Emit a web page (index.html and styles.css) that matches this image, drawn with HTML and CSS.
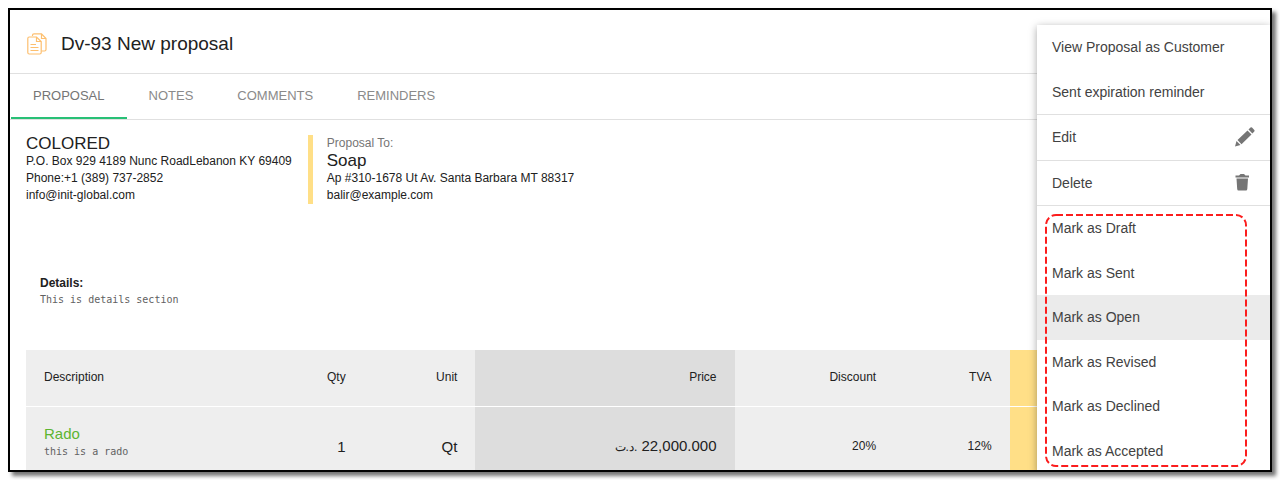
FILE: index.html
```
<!DOCTYPE html>
<html lang="en">
<head>
<meta charset="utf-8">
<title>Dv-93 New proposal</title>
<link rel="stylesheet" href="styles.css">
</head>
<body>
<main class="frame">
  <header class="page-header">
    <svg class="page-icon" viewBox="0 0 20 22" width="20" height="22" fill="none" stroke="#fdbf6f" stroke-width="1.2" aria-hidden="true">
      <path d="M5.5 3V2.2Q5.500.8 7 .8H14.5L19 5.500V16.500Q19 18 17.500 18H14.500M14.500.8V5.500H19"/>
      <path d="M2.200 4H9.500L14.200 8.500V19.500Q14.200 21 12.700 21H2.200Q.8 21 .8 19.500V5.500Q.8 4 2.200 4ZM9.500 4V8.500H14.200M3.500 11.500H9M3.500 14.500H11.500M3.500 17.500H11.500"/>
    </svg>
    <h1 class="title">Dv-93 New proposal</h1>
  </header>

  <nav class="tabs">
    <a class="tab tab-active" href="#proposal">PROPOSAL</a>
    <a class="tab" href="#notes">NOTES</a>
    <a class="tab" href="#comments">COMMENTS</a>
    <a class="tab" href="#reminders">REMINDERS</a>
  </nav>

  <section class="content">
    <div class="parties">
      <address class="party">
        <strong class="party-name">COLORED</strong>
        <span>P.O. Box 929 4189 Nunc RoadLebanon KY 69409</span>
        <span>Phone:+1 (389) 737-2852</span>
        <span>info@init-global.com</span>
      </address>
      <address class="party party-to">
        <span class="party-label">Proposal To:</span>
        <strong class="party-name">Soap</strong>
        <span>Ap #310-1678 Ut Av. Santa Barbara MT 88317</span>
        <span>balir@example.com</span>
      </address>
    </div>

    <div class="details">
      <h2 class="details-title">Details:</h2>
      <p class="note">This is details section</p>
    </div>

    <table class="items">
      <colgroup>
        <col class="col-desc"><col class="col-unit"><col class="col-price"><col class="col-discount"><col class="col-tva"><col>
      </colgroup>
      <thead>
        <tr>
          <th class="desc"><div class="split"><span>Description</span><span>Qty</span></div></th>
          <th>Unit</th>
          <th class="price">Price</th>
          <th>Discount</th>
          <th>TVA</th>
          <th class="total"></th>
        </tr>
      </thead>
      <tbody>
        <tr>
          <td class="desc">
            <div class="split">
              <div class="item"><a class="item-name" href="#rado">Rado</a><p class="note">this is a rado</p></div>
              <span class="amount">1</span>
            </div>
          </td>
          <td class="amount">Qt</td>
          <td class="price amount"><bdi class="currency" dir="rtl" lang="ar">.د.ت</bdi> 22,000.000</td>
          <td>20%</td>
          <td>12%</td>
          <td class="total"></td>
        </tr>
      </tbody>
    </table>
  </section>

  <div class="menu">
    <button class="menu-item" type="button">View Proposal as Customer</button>
    <button class="menu-item ruled" type="button">Sent expiration reminder</button>
    <button class="menu-item ruled" type="button">Edit
      <svg viewBox="0 0 20 20" width="20" height="20" fill="#757575" aria-hidden="true"><path d="M0 19.500L1.500 14 5.500 18ZM2.500 13L12.500 3.500 16.500 7.500 6.500 17.200ZM13.500 2.500L15.500.6Q16.200 0 17 .6L19.300 3Q20 3.700 19.300 4.500L17.400 6.500Z"/></svg>
    </button>
    <button class="menu-item ruled" type="button">Delete
      <svg viewBox="0 0 20 20" width="20" height="20" fill="#757575" aria-hidden="true"><path d="M.500 2.500H4L5.500 1H9L10.500 2.500H14V4.500H.500ZM1.500 5.500H13L12.300 16Q12.200 17.500 11 17.500H3.500Q2.300 17.500 2.200 16Z"/></svg>
    </button>
    <div class="marks">
      <button class="menu-item" type="button">Mark as Draft</button>
      <button class="menu-item" type="button">Mark as Sent</button>
      <button class="menu-item current" type="button">Mark as Open</button>
      <button class="menu-item" type="button">Mark as Revised</button>
      <button class="menu-item" type="button">Mark as Declined</button>
      <button class="menu-item" type="button">Mark as Accepted</button>
      <svg class="outline" aria-hidden="true"><rect x="1" y="1" width="200" height="251" rx="10" fill="none" stroke="#fb1d1d" stroke-width="2" stroke-dasharray="7 3"/></svg>
    </div>
  </div>
</main>
</body>
</html>
```
FILE: styles.css
```
* { box-sizing: border-box; }

body {
  margin: 0;
  height: 100vh;
  padding: 8px;
  background: #fff;
  color: #212121;
  font: 12px/17px "Liberation Sans", Arial, sans-serif;
}

.frame {
  position: relative;
  height: 100%;
  overflow: hidden;
  border: 2px solid #000;
  box-shadow: 4px 4px 4px rgba(0, 0, 0, 0.55);
}

.page-header {
  display: flex;
  align-items: center;
  gap: 14px;
  height: 64px;
  padding: 4px 17px 0;
  border-bottom: 1px solid #e0e0e0;
}

.title {
  margin: 0;
  font-size: 19px;
  font-weight: normal;
  line-height: 24px;
}

.tabs {
  display: flex;
  padding-left: 1px;
  border-bottom: 1px solid #e0e0e0;
}

.tab {
  padding: 1px 22px 0;
  border-bottom: 2px solid transparent;
  color: #8a8a8a;
  font-size: 13px;
  line-height: 42px;
  text-decoration: none;
}

.tab-active {
  border-color: #28c076;
  color: #757575;
}

.content { padding: 15px 16px 0; }

.parties {
  display: flex;
  align-items: flex-start;
  gap: 16px;
}

.party {
  display: flex;
  flex-direction: column;
  font-style: normal;
}

.party-name {
  font-size: 17px;
  font-weight: normal;
  line-height: 18px;
}

.party-to {
  padding-left: 14px;
  border-left: 5px solid #ffdf87;
}

.party-label { color: #757575; }

.details {
  margin-top: 71px;
  padding: 0 14px;
}

.details-title {
  margin: 0;
  font-size: 12px;
}

.note {
  margin: 0;
  color: #616161;
  font: 10px/16px "DejaVu Sans Mono", monospace;
}

.items {
  width: 100%;
  margin-top: 42px;
  border-collapse: collapse;
  table-layout: fixed;
  background: #eee;
}

.col-desc { width: 27.5%; }
.col-unit { width: 9.1%; }
.col-price { width: 21.1%; }
.col-discount { width: 13%; }
.col-tva { width: 9.4%; }

.items th,
.items td {
  padding: 0 18px;
  border-bottom: 1px solid #fff;
  font-weight: normal;
  text-align: right;
}

.items th { height: 56px; }
.items td { height: 80px; }
.items .price { background: #ddd; }
.items .total { background: #ffdf87; }

.split {
  display: flex;
  align-items: center;
  justify-content: space-between;
  text-align: left;
}

.item { padding-bottom: 8px; }
.items .amount { font-size: 15px; }
.currency { font-size: 12px; }

.item-name {
  color: #5cb531;
  font-size: 15px;
  text-decoration: none;
}

.menu {
  position: absolute;
  top: 15px;
  right: 0;
  bottom: -3px;
  display: flex;
  flex-direction: column;
  width: 233px;
  background: #fff;
  box-shadow: 0 2px 8px rgba(0, 0, 0, 0.35);
}

.menu-item {
  display: flex;
  flex: 1 0 0;
  align-items: center;
  justify-content: space-between;
  padding: 0 15px;
  border: 0;
  background: none;
  color: #424242;
  font: 14px/20px "Liberation Sans", Arial, sans-serif;
  text-align: left;
}

.ruled { border-bottom: 1px solid #e0e0e0; }
.current { background: #ebebeb; }

.marks {
  position: relative;
  display: flex;
  flex: 6 0 0;
  flex-direction: column;
}

.outline {
  position: absolute;
  top: 8px;
  left: 8px;
  width: 202px;
  height: 253px;
  pointer-events: none;
}
```
